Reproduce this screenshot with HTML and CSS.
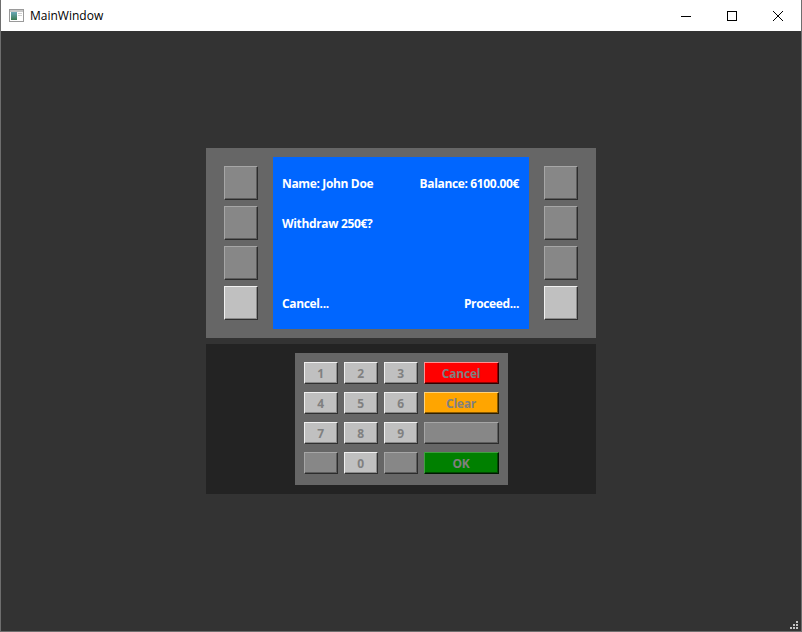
FILE: index.html
```html
<!DOCTYPE html>
<html>
<head>
<meta charset="utf-8">
<link rel="stylesheet" href="styles.css">
</head>
<body>
<div class="window">
  <div class="titlebar">
    <svg class="app-icon" width="16" height="16" viewBox="0 0 16 16">
      <rect x="0.5" y="1.5" width="14" height="12" fill="#fff" stroke="#9a9a9a"/>
      <rect x="1" y="2" width="13" height="2" fill="#c8c8c8"/>
      <defs><linearGradient id="g" x1="0" y1="0" x2="0" y2="1"><stop offset="0" stop-color="#6aa8b8"/><stop offset="1" stop-color="#3b7a52"/></linearGradient></defs>
      <rect x="2" y="4" width="6" height="8" fill="url(#g)"/>
      <rect x="9" y="5" width="4" height="1" fill="#d0d0d0"/>
      <rect x="9" y="7" width="4" height="1" fill="#d0d0d0"/>
    </svg>
    <span class="title">MainWindow</span>
    <div class="controls">
      <span class="ctl"><svg width="12" height="12" viewBox="0 0 12 12"><path d="M1 6.5h10" stroke="#000" stroke-width="1"/></svg></span>
      <span class="ctl"><svg width="12" height="12" viewBox="0 0 12 12"><rect x="1.5" y="1.5" width="9" height="9" fill="none" stroke="#000"/></svg></span>
      <span class="ctl"><svg width="12" height="12" viewBox="0 0 12 12"><path d="M1 1L11 11M11 1L1 11" stroke="#000" stroke-width="1"/></svg></span>
    </div>
  </div>
  <div class="client">
    <div class="atm-top">
      <div class="side">
        <div class="btn side-btn"></div>
        <div class="btn side-btn"></div>
        <div class="btn side-btn"></div>
        <div class="btn side-btn light"></div>
      </div>
      <div class="screen">
        <div class="row"><span>Name: John Doe</span><span>Balance: 6100.00€</span></div>
        <div class="row"><span>Withdraw 250€?</span></div>
        <div class="row"></div>
        <div class="row"><span>Cancel...</span><span>Proceed...</span></div>
      </div>
      <div class="side">
        <div class="btn side-btn"></div>
        <div class="btn side-btn"></div>
        <div class="btn side-btn"></div>
        <div class="btn side-btn light"></div>
      </div>
    </div>
    <div class="atm-bottom">
      <div class="keypad">
        <div class="btn key light">1</div>
        <div class="btn key light">2</div>
        <div class="btn key light">3</div>
        <div class="btn key wide red">Cancel</div>
        <div class="btn key light">4</div>
        <div class="btn key light">5</div>
        <div class="btn key light">6</div>
        <div class="btn key wide orange">Clear</div>
        <div class="btn key light">7</div>
        <div class="btn key light">8</div>
        <div class="btn key light">9</div>
        <div class="btn key wide"></div>
        <div class="btn key"></div>
        <div class="btn key light">0</div>
        <div class="btn key"></div>
        <div class="btn key wide green">OK</div>
      </div>
    </div>
    <div class="grip">
      <i style="left:7px;top:0"></i>
      <i style="left:4px;top:3px"></i><i style="left:7px;top:3px"></i>
      <i style="left:1px;top:6px"></i><i style="left:4px;top:6px"></i><i style="left:7px;top:6px"></i>
    </div>
  </div>
</div>
</body>
</html>
```
FILE: styles.css
```css
* { box-sizing: border-box; }
html, body { margin: 0; padding: 0; }
body { width: 802px; height: 632px; overflow: hidden; font-family: "Open Sans", "Noto Sans", sans-serif; }

.window {
  width: 802px;
  height: 632px;
  border: 1px solid #6e6e6e;
  border-top: none;
  display: flex;
  flex-direction: column;
  background: #333333;
}
.titlebar {
  height: 31px;
  background: #ffffff;
  display: flex;
  align-items: center;
  flex: none;
}
.app-icon { margin-left: 8px; }
.title { margin-left: 5px; font-size: 12px; color: #000; }
.controls { margin-left: auto; display: flex; height: 100%; }
.ctl { width: 46px; height: 100%; display: flex; align-items: center; justify-content: center; }
.ctl svg { display: block; }

.client {
  flex: 1;
  position: relative;
  display: flex;
  flex-direction: column;
  align-items: center;
  padding-top: 117px;
}

.atm-top {
  width: 390px;
  height: 190px;
  background: #666666;
  display: flex;
  align-items: center;
  padding: 0 18px;
  gap: 15px;
}
.side { display: flex; flex-direction: column; gap: 6px; }

.btn {
  --face: #878787;
  --hi: #a6a6a6;
  --lo: #2c2c2c;
  --mid: #5c5c5c;
  background: var(--face);
  border-style: solid;
  border-width: 1px;
  border-color: var(--hi) var(--lo) var(--lo) var(--hi);
  box-shadow: inset -1px -1px 0 var(--mid);
  color: #808080;
  font-weight: 700;
  font-size: 12px;
  letter-spacing: -0.2px;
  display: flex;
  align-items: center;
  justify-content: center;
}
.btn.light { --face: #c0c0c0; --hi: #f0f0f0; --lo: #303030; --mid: #8a8a8a; }
.btn.red { --face: #ff0000; --hi: #ff9090; --lo: #300000; --mid: #900000; }
.btn.orange { --face: #ffa500; --hi: #ffd27a; --lo: #302000; --mid: #8a5a00; }
.btn.green { --face: #008000; --hi: #3fa03f; --lo: #001800; --mid: #004800; }

.side-btn { width: 34px; height: 34px; }

.screen {
  width: 256px;
  height: 172px;
  background: #0066ff;
  padding: 9px 10px 9px 9px;
  display: flex;
  flex-direction: column;
  gap: 6px;
  color: #ffffff;
  font-weight: 700;
  font-size: 12px;
  letter-spacing: -0.35px;
}
.row {
  height: 34px;
  display: flex;
  align-items: center;
  justify-content: space-between;
  white-space: nowrap;
}

.atm-bottom {
  margin-top: 6px;
  width: 390px;
  height: 150px;
  background: #232323;
  display: flex;
  align-items: center;
  justify-content: center;
}
.keypad {
  width: 213px;
  height: 132px;
  background: #666666;
  padding: 9px 9px 10px 9px;
  display: grid;
  grid-template-columns: 34px 34px 34px 75px;
  grid-template-rows: repeat(4, 22px);
  column-gap: 6px;
  row-gap: 8px;
}
.key { width: 100%; height: 22px; }

.grip {
  position: absolute;
  right: 3px;
  bottom: 2px;
  width: 9px;
  height: 8px;
}
.grip i {
  position: absolute;
  width: 2px;
  height: 2px;
  background: #c4c4c4;
}
```
